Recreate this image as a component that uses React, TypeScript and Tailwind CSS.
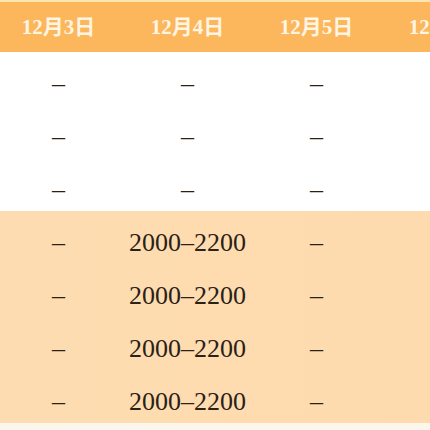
import React from 'react';

const days = ['12月3日', '12月4日', '12月5日', '12月6日'];

const plainRows = [
	['–', '–', '–', ''],
	['–', '–', '–', ''],
	['–', '–', '–', ''],
];

const shiftRows = [
	['–', '2000–2200', '–', ''],
	['–', '2000–2200', '–', ''],
	['–', '2000–2200', '–', ''],
	['–', '2000–2200', '–', ''],
];

const cellFont = { fontFamily: '"Liberation Serif", "Noto Sans CJK SC", serif' };

const Row: React.FC<{ cells: string[] }> = ({ cells }) => (
	<div className="ml-[-6px] grid h-[53px] grid-cols-[repeat(4,129px)] items-center pt-[11px]">
		{cells.map((cell, index) => (
			<div key={index} className="text-center text-[26px] leading-none text-[#2a2117]" style={cellFont}>
				{cell}
			</div>
		))}
	</div>
);

const App: React.FC = () => {
	return (
		<div className="h-[430px] w-[430px] overflow-hidden bg-[#fdf6ec]">
			<div className="h-[2px] bg-[#fde4b0]" />
			<div className="ml-[-6px] grid h-[50px] grid-cols-[repeat(4,129px)] items-center bg-[#fcb65b]">
				{days.map((day) => (
					<div
						key={day}
						className="whitespace-nowrap text-center text-[21px] font-bold leading-none text-[#fff5e2]"
						style={{ fontFamily: '"Liberation Serif", "Noto Sans CJK SC", serif' }}
					>
						{day}
					</div>
				))}
			</div>
			<div className="bg-white">
				{plainRows.map((cells, index) => (
					<Row key={index} cells={cells} />
				))}
			</div>
			<div className="bg-gradient-to-r from-[#fddcb1] via-[#fedcb0] to-[#fedbae]">
				{shiftRows.map((cells, index) => (
					<Row key={index} cells={cells} />
				))}
			</div>
		</div>
	);
};

export default App;
